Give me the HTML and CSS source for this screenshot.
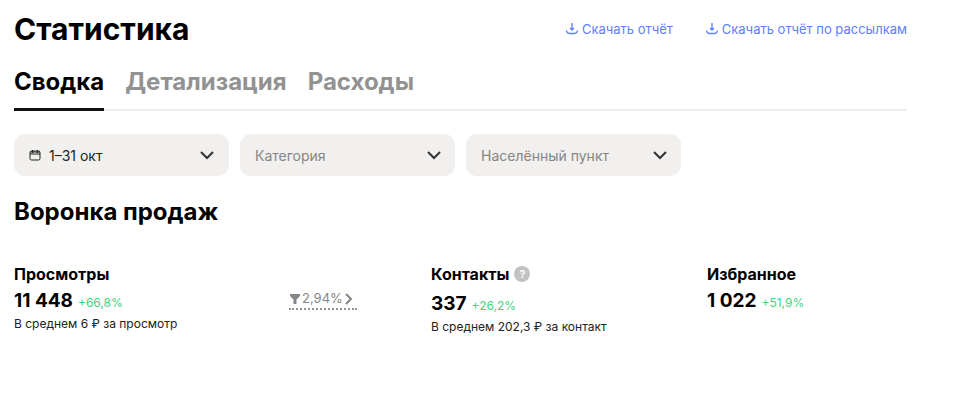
FILE: index.html
```html
<!DOCTYPE html>
<html lang="ru">
<head>
<meta charset="utf-8">
<meta name="viewport" content="width=device-width, initial-scale=1">
<title>Статистика</title>
<link rel="stylesheet" href="styles.css">
</head>
<body>
<main class="page">
  <header class="header">
    <h1 class="title">Статистика</h1>
    <div class="downloads">
      <a class="download" href="#report">
        <svg class="download-icon" viewBox="0 0 14 14" aria-hidden="true"><path d="M7 1v7M5 6 7 8 9 6M1.500 8.500c.3 2.300 1.300 3 3 3h5c1.700 0 2.700-.7 3-3"/></svg>
        <span>Скачать отчёт</span>
      </a>
      <a class="download" href="#mailing-report">
        <svg class="download-icon" viewBox="0 0 14 14" aria-hidden="true"><path d="M7 1v7M5 6 7 8 9 6M1.500 8.500c.3 2.300 1.300 3 3 3h5c1.700 0 2.700-.7 3-3"/></svg>
        <span>Скачать отчёт по рассылкам</span>
      </a>
    </div>
  </header>

  <nav class="tabs">
    <a class="tab tab-active" href="#summary" aria-current="page">Сводка</a>
    <a class="tab" href="#details">Детализация</a>
    <a class="tab" href="#expenses">Расходы</a>
  </nav>

  <div class="filters">
    <button class="filter filter-date" type="button">
      <svg class="calendar" viewBox="0 0 12 12" aria-hidden="true"><rect x="1" y="2" width="10" height="9" rx="1.500"/><path d="M1 5h10M1 3h10M3.500 1v3M8.500 1v3"/></svg>
      <span>1–31 окт</span>
      <svg class="chevron" viewBox="0 0 14 10" aria-hidden="true"><path d="m1 2 6 6 6-6"/></svg>
    </button>
    <div class="filter-wrap">
      <select class="filter filter-select" aria-label="Категория"><option>Категория</option></select>
      <svg class="chevron chevron-over" viewBox="0 0 14 10" aria-hidden="true"><path d="m1 2 6 6 6-6"/></svg>
    </div>
    <div class="filter-wrap">
      <select class="filter filter-select" aria-label="Населённый пункт"><option>Населённый пункт</option></select>
      <svg class="chevron chevron-over" viewBox="0 0 14 10" aria-hidden="true"><path d="m1 2 6 6 6-6"/></svg>
    </div>
  </div>

  <h2 class="subtitle">Воронка продаж</h2>

  <section class="funnel">
    <div class="metric">
      <h3 class="metric-name">Просмотры</h3>
      <p class="metric-row"><span class="value">11 448</span> <span class="growth">+66,8%</span></p>
      <p class="note">В среднем 6 ₽ за просмотр</p>
    </div>
    <div class="conversion-cell">
      <button class="conversion" type="button">
        <svg class="funnel-icon" viewBox="0 0 10 10" aria-hidden="true"><path d="M0 0h10v2L6.500 5.500V10h-3V5.500L0 2z"/></svg>
        <span>2,94%</span>
        <svg class="arrow" viewBox="0 0 8 12" aria-hidden="true"><path d="m1 1 5 5-5 5"/></svg>
      </button>
    </div>
    <div class="metric">
      <div class="metric-head">
        <h3 class="metric-name">Контакты</h3>
        <button class="help" type="button" aria-label="Подсказка">?</button>
      </div>
      <p class="metric-row"><span class="value">337</span> <span class="growth">+26,2%</span></p>
      <p class="note">В среднем 202,3 ₽ за контакт</p>
    </div>
    <div class="metric">
      <h3 class="metric-name">Избранное</h3>
      <p class="metric-row"><span class="value">1 022</span> <span class="growth">+51,9%</span></p>
    </div>
  </section>
</main>
</body>
</html>
```
FILE: styles.css
```css
* {
  box-sizing: border-box;
}

body {
  margin: 0;
  background: #fff;
  color: #000;
  font-family: Inter, "Noto Sans", sans-serif;
  font-size: 13px;
}

h1, h2, h3, p {
  margin: 0;
}

button, select {
  font-family: inherit;
  border: 0;
}

a {
  text-decoration: none;
}

svg {
  fill: none;
  stroke: currentColor;
  flex: none;
}

.page {
  padding: 12px 58px 24px 14px;
}

.header {
  display: flex;
  justify-content: space-between;
  align-items: center;
}

.title {
  font-size: 30px;
  line-height: 34px;
  font-weight: 700;
}

.downloads {
  display: flex;
  gap: 32px;
}

.download {
  display: flex;
  align-items: center;
  gap: 3px;
  color: #5f7dff;
  font-size: 13px;
  line-height: 16px;
}

.download-icon {
  width: 14px;
  height: 14px;
  stroke-width: 1.3;
}

.tabs {
  display: flex;
  gap: 21px;
  margin-top: 20px;
  box-shadow: inset 0 -2px #ececec;
}

.tab {
  color: #929292;
  font-size: 24px;
  line-height: 32px;
  font-weight: 700;
  padding-bottom: 10px;
  border-bottom: 3px solid transparent;
}

.tab-active {
  color: #000;
  border-bottom-color: #111;
}

.filters {
  display: grid;
  grid-template-columns: repeat(3, minmax(0, 215px));
  gap: 11px;
  margin-top: 23px;
}

.filter {
  display: flex;
  align-items: center;
  width: 100%;
  height: 42px;
  padding: 0 15px;
  border-radius: 11px;
  background: #f1f0ee;
  font-size: 14px;
}

.filter-date {
  color: #222;
}

.filter-select {
  appearance: none;
  color: #858585;
}

.filter-wrap {
  position: relative;
}

.calendar {
  width: 12px;
  height: 12px;
  margin-right: 8px;
}

.chevron {
  width: 14px;
  height: 10px;
  margin-left: auto;
  color: #333;
  stroke-width: 2;
}

.chevron-over {
  position: absolute;
  right: 14px;
  top: 16px;
  pointer-events: none;
}

.subtitle {
  margin-top: 21px;
  font-size: 24px;
  line-height: 30px;
  font-weight: 700;
}

.funnel {
  display: grid;
  grid-template-columns: 275fr 142fr 276fr 200fr;
  margin-top: 36px;
}

.metric-head {
  display: flex;
  align-items: center;
  gap: 5px;
  padding-bottom: 3px;
}

.metric-name {
  font-size: 16px;
  line-height: 22px;
  font-weight: 700;
}

.help {
  width: 16px;
  height: 16px;
  padding: 0;
  border-radius: 50%;
  background: #c2c2c2;
  color: #fff;
  font-size: 11px;
  line-height: 16px;
  font-weight: 600;
}

.metric-row {
  display: flex;
  align-items: baseline;
  gap: 5px;
  margin-top: 3px;
}

.value {
  font-size: 19px;
  line-height: 26px;
  font-weight: 700;
}

.growth {
  color: #3ed47b;
  font-size: 12px;
}

.note {
  color: #222;
  font-size: 12px;
  line-height: 20px;
}

.conversion {
  display: inline-flex;
  align-items: center;
  gap: 2px;
  margin-top: 27px;
  padding: 0 4px 1px 1px;
  border-bottom: 2px dotted #929292;
  background: none;
  color: #858585;
  font-size: 13px;
  line-height: 17px;
}

.funnel-icon {
  width: 10px;
  height: 10px;
  fill: currentColor;
  stroke: none;
}

.arrow {
  width: 8px;
  height: 12px;
  stroke-width: 2;
}
```
